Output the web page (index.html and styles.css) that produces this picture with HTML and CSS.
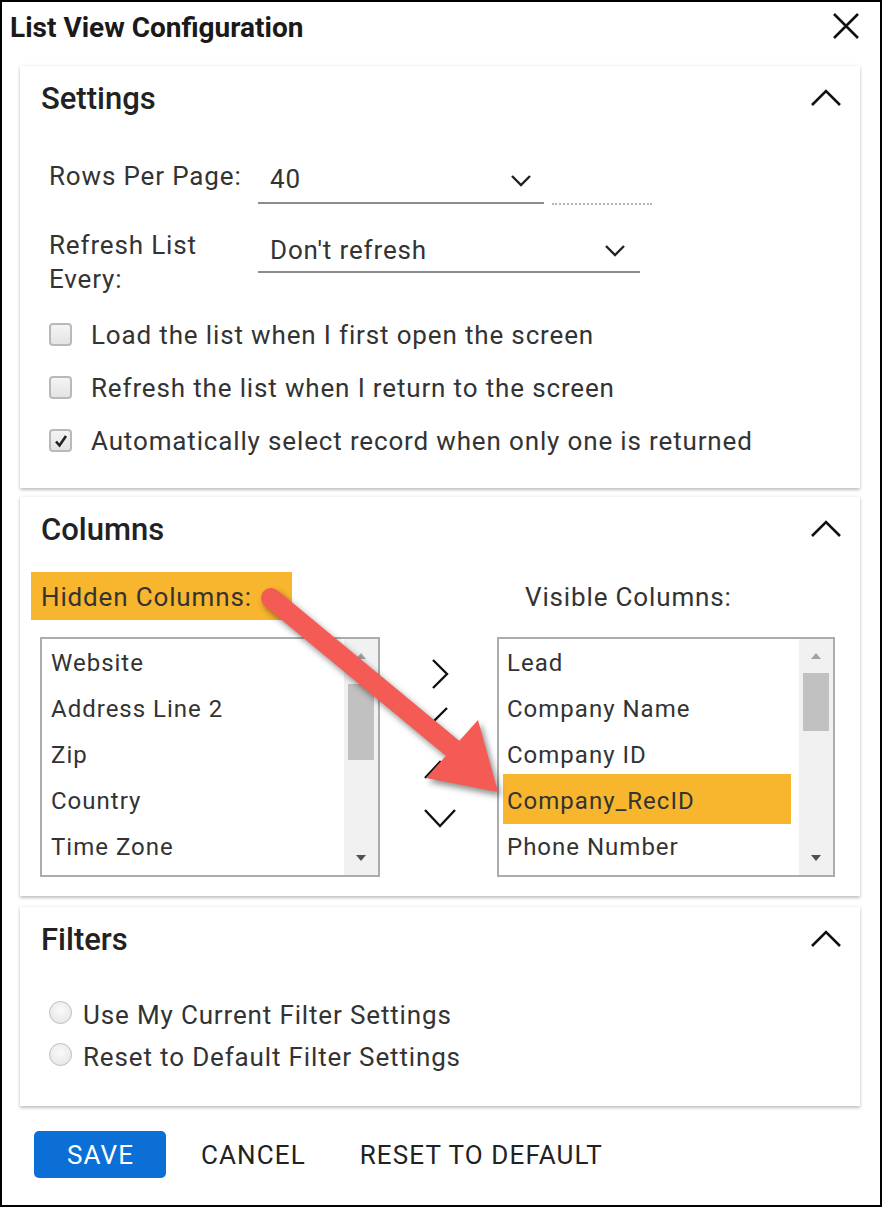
FILE: index.html
```html
<!DOCTYPE html>
<html lang="en">
<head>
<meta charset="utf-8">
<title>List View Configuration</title>
<link rel="stylesheet" href="styles.css">
</head>
<body>
<div class="frame">
  <header class="dlg-head">
    <h1 class="dlg-title">List View Configuration</h1>
    <button class="close" aria-label="Close">
      <svg width="28" height="28" viewBox="0 0 28 28"><path d="M2 2 L26 26 M26 2 L2 26" stroke="#111" stroke-width="2.6" fill="none"/></svg>
    </button>
  </header>

  <div class="cards">
    <section class="card">
      <div class="card-head">
        <h2 class="card-title">Settings</h2>
        <svg class="chev" width="32" height="18" viewBox="0 0 32 18"><path d="M2 16 L16 2 L30 16" stroke="#111" stroke-width="2.6" fill="none"/></svg>
      </div>
      <div class="card-body settings-body">
        <div class="field field-one">
          <label class="field-label">Rows Per Page:</label>
          <div class="select select-short">
            <span class="select-value">40</span>
            <svg class="select-chev" width="22" height="13" viewBox="0 0 22 13"><path d="M2 2 L11 11 L20 2" stroke="#222" stroke-width="2.4" fill="none"/></svg>
          </div>
          <span class="dots"></span>
        </div>
        <div class="field field-two">
          <label class="field-label">Refresh List<br>Every:</label>
          <div class="select select-long">
            <span class="select-value">Don't refresh</span>
            <svg class="select-chev" width="22" height="13" viewBox="0 0 22 13"><path d="M2 2 L11 11 L20 2" stroke="#222" stroke-width="2.4" fill="none"/></svg>
          </div>
        </div>
        <div class="checks">
          <label class="check-row"><span class="cb"></span>Load the list when I first open the screen</label>
          <label class="check-row"><span class="cb"></span>Refresh the list when I return to the screen</label>
          <label class="check-row"><span class="cb cb-on"><svg width="14" height="14" viewBox="0 0 14 14"><path d="M2 7.5 L5.5 11.5 L12 2" stroke="#222" stroke-width="2.6" fill="none"/></svg></span>Automatically select record when only one is returned</label>
        </div>
      </div>
    </section>

    <section class="card">
      <div class="card-head">
        <h2 class="card-title">Columns</h2>
        <svg class="chev" width="32" height="18" viewBox="0 0 32 18"><path d="M2 16 L16 2 L30 16" stroke="#111" stroke-width="2.6" fill="none"/></svg>
      </div>
      <div class="card-body columns-body">
        <div class="col-label hidden-label">Hidden Columns:</div>
        <div class="col-gap"></div>
        <div class="col-label visible-label">Visible Columns:</div>

        <div class="listbox">
          <ul class="list-items">
            <li>Website</li>
            <li>Address Line 2</li>
            <li>Zip</li>
            <li>Country</li>
            <li>Time Zone</li>
          </ul>
          <div class="scrollbar">
            <span class="sb-up"></span>
            <span class="sb-thumb thumb-left"></span>
            <span class="sb-down"></span>
          </div>
        </div>

        <div class="movers">
          <button class="mover" aria-label="Move right"><svg width="32" height="32" viewBox="0 0 32 32"><path d="M9 2 L23 16 L9 30" stroke="#111" stroke-width="2.4" fill="none"/></svg></button>
          <button class="mover" aria-label="Move left"><svg width="32" height="32" viewBox="0 0 32 32"><path d="M23 2 L9 16 L23 30" stroke="#111" stroke-width="2.4" fill="none"/></svg></button>
          <button class="mover" aria-label="Move up"><svg width="32" height="32" viewBox="0 0 32 32"><path d="M1 24 L16 8 L31 24" stroke="#111" stroke-width="2.4" fill="none"/></svg></button>
          <button class="mover" aria-label="Move down"><svg width="32" height="32" viewBox="0 0 32 32"><path d="M1 8 L16 24 L31 8" stroke="#111" stroke-width="2.4" fill="none"/></svg></button>
        </div>

        <div class="listbox listbox-right">
          <ul class="list-items">
            <li>Lead</li>
            <li>Company Name</li>
            <li>Company ID</li>
            <li class="selected">Company_RecID</li>
            <li>Phone Number</li>
          </ul>
          <div class="scrollbar">
            <span class="sb-up"></span>
            <span class="sb-thumb thumb-right"></span>
            <span class="sb-down"></span>
          </div>
        </div>
      </div>
    </section>

    <section class="card card-filters">
      <div class="card-head">
        <h2 class="card-title">Filters</h2>
        <svg class="chev" width="32" height="18" viewBox="0 0 32 18"><path d="M2 16 L16 2 L30 16" stroke="#111" stroke-width="2.6" fill="none"/></svg>
      </div>
      <div class="card-body filters-body">
        <label class="radio-row"><span class="radio"></span>Use My Current Filter Settings</label>
        <label class="radio-row"><span class="radio"></span>Reset to Default Filter Settings</label>
      </div>
    </section>
  </div>

  <footer class="actions">
    <button class="btn btn-primary">SAVE</button>
    <button class="btn btn-text btn-cancel">CANCEL</button>
    <button class="btn btn-text btn-reset">RESET TO DEFAULT</button>
  </footer>

  <svg class="annotation" width="882" height="1207" viewBox="0 0 882 1207" aria-hidden="true">
    <g class="annot-arrow">
      <line x1="271" y1="598" x2="457" y2="752" stroke="#F45B55" stroke-width="20" stroke-linecap="round"/>
      <polygon points="426,778 478,720 498,792" fill="#F45B55"/>
    </g>
  </svg>
</div>
</body>
</html>
```

FILE: styles.css
```css
* { box-sizing: border-box; }

html, body {
  margin: 0;
  padding: 0;
  background: #fff;
}

body {
  font-family: Roboto, "Liberation Sans", Arial, sans-serif;
  color: #333;
  font-size: 26px;
  letter-spacing: 0.85px;
}

.frame {
  position: relative;
  width: 882px;
  height: 1207px;
  border: 2px solid #000;
  display: flex;
  flex-direction: column;
  overflow: hidden;
}

/* dialog header */
.dlg-head {
  height: 64px;
  display: flex;
  justify-content: space-between;
  align-items: flex-start;
  padding: 0 20px 0 8px;
}

.dlg-title {
  margin: 10px 0 0;
  font-size: 28px;
  font-weight: 700;
  line-height: 32px;
  color: #1a1a1a;
  letter-spacing: 0;
}

.close {
  margin-top: 10px;
  padding: 0;
  border: 0;
  background: none;
  width: 28px;
  height: 28px;
}
.close svg { display: block; }

/* cards */
.cards {
  display: flex;
  flex-direction: column;
  gap: 9px;
  padding: 0 20px 0 18px;
}

.card {
  background: #fff;
  box-shadow: 0 2px 3px rgba(0, 0, 0, 0.22), 0 0 4px rgba(0, 0, 0, 0.08);
}

.card-filters { margin-top: 2px; }

.card-head {
  height: 64px;
  display: flex;
  align-items: center;
  justify-content: space-between;
  padding: 0 18px 0 21px;
}

.card-title {
  margin: 0;
  font-size: 31px;
  font-weight: 500;
  letter-spacing: 0;
  color: #222;
}

.chev { display: block; }

/* settings */
.settings-body {
  padding: 22px 29px 21px;
}

.field {
  display: flex;
  align-items: flex-start;
}

.field-label {
  width: 209px;
  flex: none;
  line-height: 34px;
  color: #333;
}

.field-one .field-label { line-height: 48px; }

.select {
  display: flex;
  align-items: center;
  justify-content: space-between;
  border-bottom: 2px solid #8c8c8c;
  padding: 4px 12px 0 12px;
  color: #333;
}

.select-short { width: 286px; height: 52px; }
.select-long { width: 382px; height: 45px; padding-top: 0; padding-right: 14px; }

.select-value { line-height: 34px; }

.select-chev { display: block; margin-top: 2px; }

.dots {
  width: 100px;
  margin-left: 8px;
  margin-top: 51px;
  border-top: 2px dotted #b5b5b5;
}

.field-two { margin-top: 23px; }

.checks {
  margin-top: 12px;
  display: flex;
  flex-direction: column;
}

.check-row {
  height: 53px;
  display: flex;
  align-items: center;
  gap: 19px;
  color: #333;
}

.cb {
  width: 23px;
  height: 23px;
  flex: none;
  border: 2px solid #b9b9b9;
  border-radius: 4px;
  background: linear-gradient(#f4f4f4, #e4e4e4);
  display: flex;
  align-items: center;
  justify-content: center;
}

/* columns */
.columns-body {
  display: grid;
  grid-template-columns: 340px 117px 338px;
  grid-template-rows: 48px 240px;
  row-gap: 17px;
  padding: 11px 25px 19px 20px;
}

.col-label {
  line-height: 50px;
}

.hidden-label {
  margin-left: -9px;
  width: 261px;
  padding-left: 10px;
  background: #F8B62E;
  color: #333;
}

.visible-label {
  padding-left: 28px;
}

.listbox {
  border: 2px solid #acacac;
  display: flex;
  overflow: hidden;
}

.list-items {
  list-style: none;
  margin: 0;
  padding: 1px 0 0;
  flex: 1;
  font-size: 24px;
  letter-spacing: 1px;
}

.list-items li {
  height: 46px;
  line-height: 46px;
  padding-left: 9px;
  color: #333;
  white-space: nowrap;
}

.listbox-right .list-items li { padding-left: 8px; }

.listbox-right .list-items li.selected {
  background: #F8B62E;
  margin: -4px 8px 0 4px;
  height: 50px;
  padding-top: 4px;
  padding-left: 4px;
}

.scrollbar {
  width: 34px;
  flex: none;
  background: #f1f1f1;
  position: relative;
}

.sb-up, .sb-down {
  position: absolute;
  left: 50%;
  width: 0;
  height: 0;
  margin-left: -5px;
  border-left: 5px solid transparent;
  border-right: 5px solid transparent;
}

.sb-up {
  top: 14px;
  border-bottom: 6px solid #a3a3a3;
}

.sb-down {
  bottom: 14px;
  border-top: 6px solid #505050;
}

.sb-thumb {
  position: absolute;
  left: 4px;
  right: 4px;
  background: #c1c1c1;
}

.thumb-left { top: 45px; height: 76px; }
.thumb-right { top: 34px; height: 58px; }

.movers {
  display: flex;
  flex-direction: column;
  align-items: center;
  padding-top: 14px;
  gap: 2px;
  padding-left: 2px;
}

.mover {
  width: 46px;
  height: 46px;
  padding: 0;
  border: 0;
  background: none;
  display: flex;
  align-items: center;
  justify-content: center;
}

/* filters */
.filters-body {
  padding: 23px 29px 28px;
}

.radio-row {
  height: 42px;
  display: flex;
  align-items: center;
  gap: 11px;
  color: #333;
}

.radio {
  width: 23px;
  height: 23px;
  flex: none;
  border-radius: 50%;
  border: 1.5px solid #bcbcbc;
  background: radial-gradient(circle at 50% 40%, #fafafa, #e2e2e2);
  margin-top: -6px;
}

/* footer */
.actions {
  display: flex;
  align-items: center;
  padding: 25px 0 0 32px;
}

.btn {
  font-family: inherit;
  font-size: 26px;
  letter-spacing: 1.1px;
  border: 0;
  background: none;
  color: #222;
  padding: 0;
  height: 47px;
}

.btn-primary {
  width: 132px;
  background: #0B6FD5;
  color: #fff;
  border-radius: 5px;
  padding-left: 1px;
}

.btn-cancel { margin-left: 35px; }
.btn-reset { margin-left: 54px; }

/* annotation overlay */
.annotation {
  position: absolute;
  left: -2px;
  top: -2px;
  pointer-events: none;
}

.annot-arrow {
  filter: drop-shadow(3px 4px 3px rgba(0, 0, 0, 0.45));
}
```
